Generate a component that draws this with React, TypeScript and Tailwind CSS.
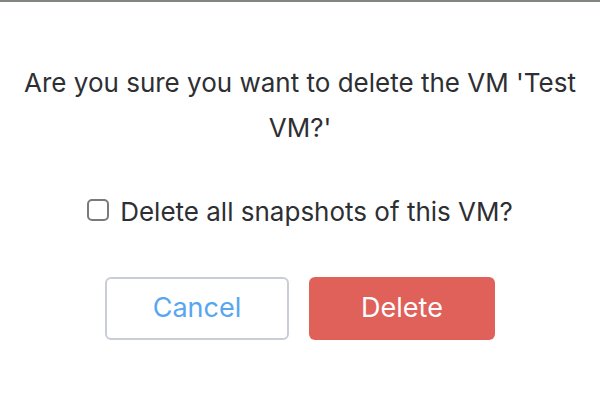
import React from "react";

export default function App() {
  return (
    <div
      className="w-[600px] h-[400px] bg-white border-t-2 border-[#80857f] flex flex-col items-center"
      style={{ fontFamily: "Inter, 'Liberation Sans', sans-serif" }}
    >
      <p className="mt-[58px] px-2 text-center text-[26px] leading-[45px] text-[#2e2f33]">
        Are you sure you want to delete the VM 'Test
        <br />
        VM?'
      </p>
      <label className="mt-[45px] flex items-center gap-[11px] h-[32px] text-[26px] text-[#2e2f33]">
        <span className="w-[22px] h-[22px] -mt-[3px] rounded-[5px] border-2 border-[#7a7a7a] bg-white" />
        <span>Delete all snapshots of this VM?</span>
      </label>
      <div className="mt-[50px] flex gap-[20px]">
        <button className="w-[184px] h-[63px] rounded-[6px] border-2 border-[#c9cdd8] bg-white text-[27px] text-[#58a6f0]">
          Cancel
        </button>
        <button className="w-[186px] h-[63px] rounded-[6px] bg-[#e0605a] text-[27px] text-white">
          Delete
        </button>
      </div>
    </div>
  );
}
